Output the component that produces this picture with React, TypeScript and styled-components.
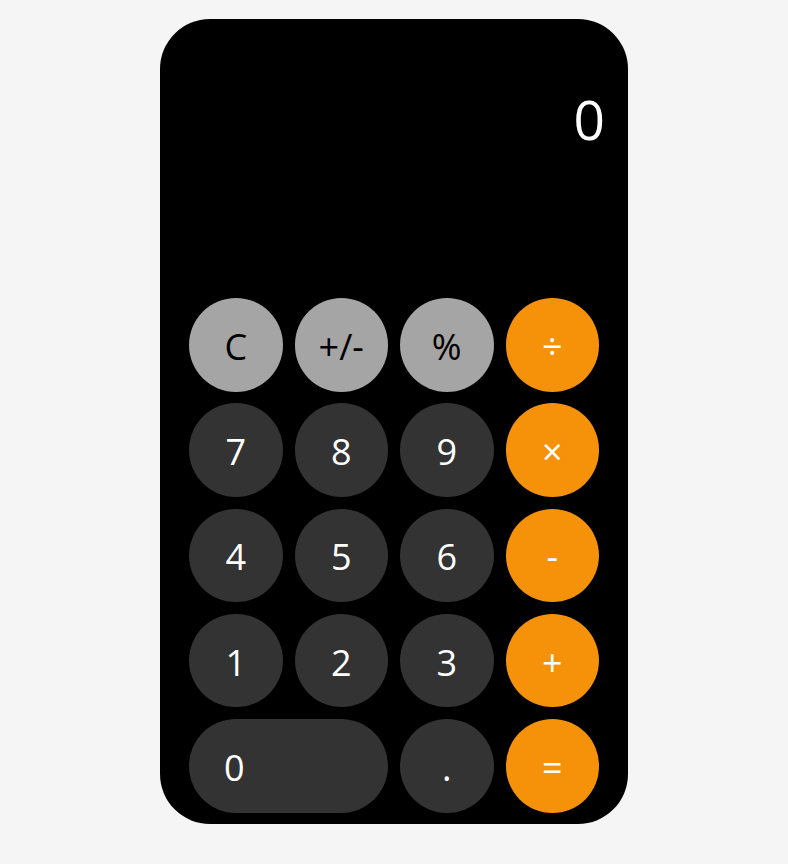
import React from "react";
import styled, { createGlobalStyle } from "styled-components";

const GlobalStyle = createGlobalStyle`
  html, body {
    margin: 0;
    padding: 0;
    background: #f5f5f5;
    font-family: "Open Sans", "Noto Sans", sans-serif;
  }
`;

const Page = styled.div`
  display: flex;
  justify-content: center;
  align-items: flex-start;
  padding-top: 19px;
  min-height: 864px;
  box-sizing: border-box;
`;

const Card = styled.div`
  width: 468px;
  box-sizing: border-box;
  background: #000;
  border-radius: 50px;
  padding: 0 29px 11px 29px;
  display: flex;
  flex-direction: column;
`;

const Display = styled.div`
  height: 279px;
  box-sizing: border-box;
  padding: 72px 0 0 0;
  margin-right: -6px;
  text-align: right;
  color: #fff;
  font-size: 55px;
  line-height: 55px;
  font-weight: 400;
`;

const Keypad = styled.div`
  display: grid;
  grid-template-columns: repeat(4, 1fr);
  grid-auto-rows: 93.5px;
  column-gap: 12px;
  row-gap: 11.8px;
`;

type Kind = "func" | "num" | "op";

const Key = styled.button<{ $kind: Kind; $wide?: boolean }>`
  border: none;
  outline: none;
  margin: 0;
  padding: 3px 0 0 0;
  font-family: "Open Sans", "Noto Sans", sans-serif;
  font-size: 36px;
  font-weight: 400;
  border-radius: 47px;
  display: flex;
  align-items: center;
  justify-content: ${(p) => (p.$wide ? "flex-start" : "center")};
  padding-left: ${(p) => (p.$wide ? "35px" : "0")};
  grid-column: ${(p) => (p.$wide ? "span 2" : "auto")};
  background: ${(p) =>
    p.$kind === "func" ? "#a5a5a5" : p.$kind === "op" ? "#f5920a" : "#333333"};
  color: ${(p) => (p.$kind === "func" ? "#000" : "#fff")};
  cursor: pointer;
`;

const keys: { label: string; kind: Kind; wide?: boolean }[] = [
  { label: "C", kind: "func" },
  { label: "+/-", kind: "func" },
  { label: "%", kind: "func" },
  { label: "÷", kind: "op" },
  { label: "7", kind: "num" },
  { label: "8", kind: "num" },
  { label: "9", kind: "num" },
  { label: "×", kind: "op" },
  { label: "4", kind: "num" },
  { label: "5", kind: "num" },
  { label: "6", kind: "num" },
  { label: "-", kind: "op" },
  { label: "1", kind: "num" },
  { label: "2", kind: "num" },
  { label: "3", kind: "num" },
  { label: "+", kind: "op" },
  { label: "0", kind: "num", wide: true },
  { label: ".", kind: "num" },
  { label: "=", kind: "op" },
];

export default function App() {
  return (
    <>
      <GlobalStyle />
      <Page>
        <Card>
          <Display>0</Display>
          <Keypad>
            {keys.map((k) => (
              <Key key={k.label} $kind={k.kind} $wide={k.wide}>
                {k.label}
              </Key>
            ))}
          </Keypad>
        </Card>
      </Page>
    </>
  );
}
